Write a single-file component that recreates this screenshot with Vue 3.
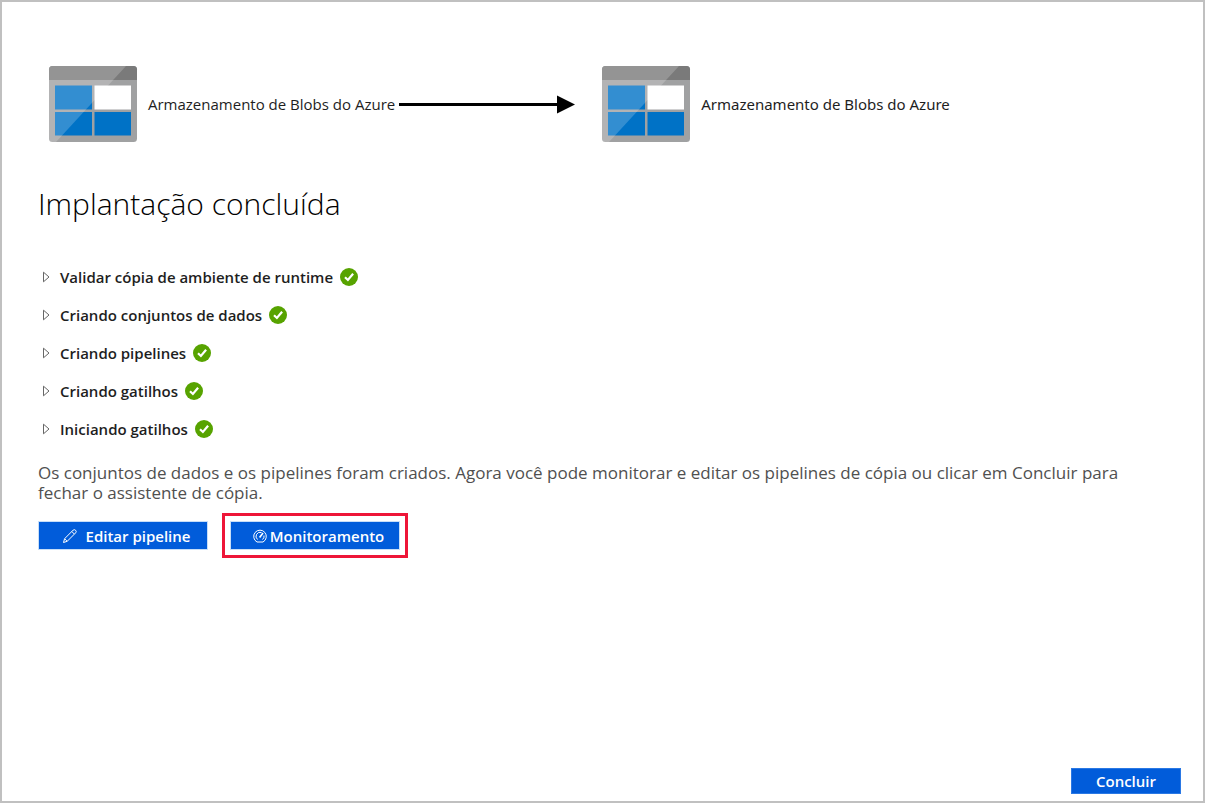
<script setup>
import { ref } from 'vue'

const steps = ref([
  { label: 'Validar cópia de ambiente de runtime', open: false },
  { label: 'Criando conjuntos de dados', open: false },
  { label: 'Criando pipelines', open: false },
  { label: 'Criando gatilhos', open: false },
  { label: 'Iniciando gatilhos', open: false }
])
</script>

<template>
  <main class="page">
    <header class="flow">
      <template v-for="side in ['source', 'target']" :key="side">
        <svg v-if="side === 'target'" class="arrow" viewBox="0 0 176 20" aria-hidden="true">
          <path d="M0 10.500H160" stroke="#000" stroke-width="3" />
          <path d="M158 1.500L176 10.500L158 19.500Z" fill="#000" />
        </svg>
        <div class="store" :class="side">
          <svg class="blob" viewBox="0 0 90 78" aria-hidden="true">
            <rect x="1" y="1" width="88" height="76" rx="3.5" fill="#a0a1a2" />
            <path d="M1 15V4.500Q1 1 4.500 1H85.500Q89 1 89 4.500V15Z" fill="#7a7a7a" />
            <rect x="7" y="20.500" width="37" height="24" fill="#0072c6" />
            <rect x="46.500" y="20.500" width="36.500" height="24" fill="#fff" />
            <rect x="7" y="47" width="37" height="23.500" fill="#0072c6" />
            <rect x="46.500" y="47" width="36.500" height="23.500" fill="#0072c6" />
            <path d="M1 4.500Q1 1 4.500 1H78L8 77H4.500Q1 77 1 73.500Z" fill="#fff" fill-opacity=".2" />
          </svg>
          <span>Armazenamento de Blobs do Azure</span>
        </div>
      </template>
    </header>

    <h1>Implantação concluída</h1>

    <ul class="steps">
      <li v-for="step in steps" :key="step.label">
        <button class="step" type="button" :aria-expanded="step.open" @click="step.open = !step.open">
          <svg class="caret" viewBox="0 0 8 12" aria-hidden="true">
            <path d="M1.500 1.200L7 6L1.500 10.800Z" fill="#fff" stroke="#666" />
          </svg>
          <span>{{ step.label }}</span>
          <svg class="check" viewBox="0 0 18 18" aria-hidden="true">
            <circle cx="9" cy="9" r="9" fill="#57a300" />
            <path d="M5 9.200L7.900 12L13.100 5.800" fill="none" stroke="#fff" stroke-width="2.200" />
          </svg>
        </button>
      </li>
    </ul>

    <p>Os conjuntos de dados e os pipelines foram criados. Agora você pode monitorar e editar os pipelines de cópia ou clicar em Concluir para fechar o assistente de cópia.</p>

    <div class="actions">
      <button class="primary edit" type="button">
        <svg viewBox="0 0 16 16" aria-hidden="true">
          <path d="M1.500 14.500L2.600 10.700L11 2.300Q12.300 1 13.600 2.300Q14.900 3.600 13.600 4.900L5.200 13.300ZM2.600 10.700L5.200 13.300M9.800 3.500L12.400 6.100" fill="none" stroke="#fff" />
        </svg>
        Editar pipeline
      </button>
      <div class="highlight">
        <button class="primary monitor" type="button">
          <svg viewBox="0 0 16 16" aria-hidden="true">
            <path d="M5 14A6.300 6.300 0 1 1 11 14Z" fill="none" stroke="#fff" />
            <path d="M5.500 11.500A4.100 4.100 0 0 1 9.500 4.500M12 7.500A4.100 4.100 0 0 1 10.500 11.500" fill="none" stroke="#fff" />
            <path d="M7.600 9.600L11 5" stroke="#fff" stroke-width="1.600" />
          </svg>
          Monitoramento
        </button>
      </div>
    </div>

    <footer>
      <button class="primary finish" type="button">Concluir</button>
    </footer>
  </main>
</template>

<style>
body {
  margin: 0;
}
</style>

<style scoped>
.page {
  box-sizing: border-box;
  min-height: 100vh;
  display: flex;
  flex-direction: column;
  padding: 63px 22px 7px 36px;
  border: 2px solid #c0c0c0;
  background: #fff;
  color: #1e1e1e;
  font-family: "Open Sans", "Noto Sans", sans-serif;
}

.flow {
  display: flex;
  align-items: center;
  padding-left: 10px;
  font-size: 15px;
}

.store {
  display: flex;
  align-items: center;
  gap: 10px;
  white-space: nowrap;
}

.target {
  font-family: "Noto Sans", "Open Sans", sans-serif;
}

.blob {
  width: 90px;
  height: 78px;
}

.arrow {
  width: 176px;
  height: 20px;
  flex: none;
  margin: 0 26px 0 4px;
}

h1 {
  margin: 39px 0 0;
  color: #000;
  font-size: 30px;
  font-weight: 300;
  line-height: 44px;
}

.steps {
  margin: 37px 0 0;
  padding: 0;
  list-style: none;
}

.step {
  display: flex;
  align-items: center;
  height: 28px;
  margin-bottom: 10px;
  padding: 0 0 0 4px;
  border: 0;
  background: none;
  color: inherit;
  font: 600 15px/20px "Open Sans", "Noto Sans", sans-serif;
}

.caret {
  width: 8px;
  height: 12px;
  margin-right: 10px;
}

.check {
  width: 18px;
  height: 18px;
  margin-left: 7px;
}

p {
  max-width: 1100px;
  margin: 10px 0 0;
  color: #505050;
  font-size: 17px;
  line-height: 20px;
}

.actions {
  display: flex;
  align-items: center;
  gap: 14px;
  margin-top: 10px;
}

.primary {
  display: flex;
  align-items: center;
  justify-content: center;
  height: 29px;
  padding: 0;
  border: 1px solid #c7def8;
  background: #015cda;
  color: #fff;
  font: 600 15px/20px "Open Sans", "Noto Sans", sans-serif;
}

.primary svg {
  width: 16px;
  height: 16px;
}

.edit,
.monitor {
  width: 170px;
}

.edit {
  gap: 8px;
  padding-left: 6px;
}

.monitor {
  gap: 2px;
  padding-left: 6px;
}

.highlight {
  padding: 5px;
  border: 3px solid #ee1638;
}

footer {
  display: flex;
  justify-content: flex-end;
  margin-top: auto;
}

.finish {
  width: 110px;
  height: 26px;
  border-color: #2a78e4;
}
</style>
